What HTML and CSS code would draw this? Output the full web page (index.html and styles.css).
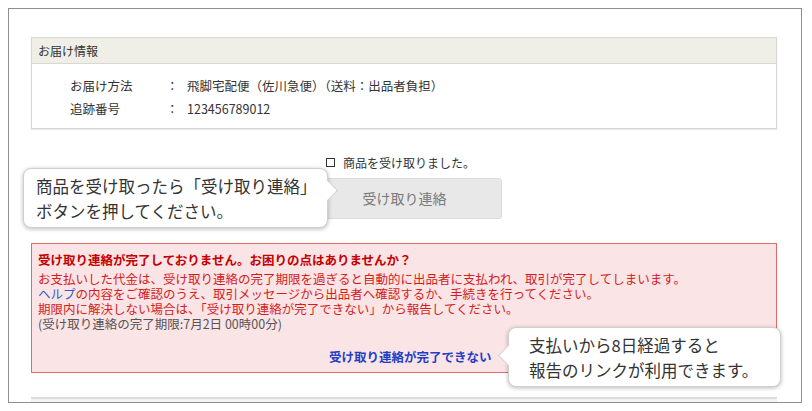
FILE: index.html
```html
<!DOCTYPE html>
<html lang="ja">
<head>
<meta charset="utf-8">
<title>お届け情報</title>
<link rel="stylesheet" href="styles.css">
</head>
<body>
<div class="frame">
  <section class="info">
    <div class="info-head">お届け情報</div>
    <div class="info-body">
      <div class="row"><span class="label">お届け方法</span><span class="colon">：</span><span class="value">飛脚宅配便（佐川急便）（送料：出品者負担）</span></div>
      <div class="row"><span class="label">追跡番号</span><span class="colon">：</span><span class="value">123456789012</span></div>
    </div>
  </section>

  <div class="receive">
    <label class="check"><span class="box"></span>商品を受け取りました。</label>
    <div class="btn">受け取り連絡</div>
  </div>

  <section class="alert">
    <p class="alert-title">受け取り連絡が完了しておりません。お困りの点はありませんか？</p>
    <p class="alert-line">お支払いした代金は、受け取り連絡の完了期限を過ぎると自動的に出品者に支払われ、取引が完了してしまいます。</p>
    <p class="alert-line"><span class="help">ヘルプ</span>の内容をご確認のうえ、取引メッセージから出品者へ確認するか、手続きを行ってください。</p>
    <p class="alert-line">期限内に解決しない場合は、「受け取り連絡が完了できない」から報告してください。</p>
    <p class="alert-limit">(受け取り連絡の完了期限:7月2日 00時00分)</p>
    <p class="alert-link"><span class="link">受け取り連絡が完了できない</span></p>
  </section>

  <div class="next"></div>

  <div class="tip tip-right">商品を受け取ったら「受け取り連絡」<br>ボタンを押してください。</div>
  <div class="tip tip-left">支払いから8日経過すると<br>報告のリンクが利用できます。</div>
</div>
</body>
</html>
```

FILE: styles.css
```css
* { box-sizing: border-box; }
html, body { margin: 0; padding: 0; background: #fff; }
body {
  padding: 8px 0 0 8px;
  font-family: "Noto Sans CJK JP", "Noto Sans", sans-serif;
  color: #333;
}
p { margin: 0; }

.frame {
  position: relative;
  width: 794px;
  height: 395px;
  border: 1px solid #8f8f8f;
  padding: 28px 0 0 22px;
  overflow: hidden;
}

.info {
  width: 746px;
  border: 1px solid #d6d6d2;
  box-shadow: 0 1px 1px rgba(0,0,0,0.08);
}
.info-head {
  height: 26px;
  line-height: 25px;
  background: #efeee7;
  border-bottom: 1px solid #d8d8d2;
  padding-left: 6px;
  font-size: 12px;
  color: #333;
}
.info-body { padding: 10px 0 8px 38px; }
.row {
  display: flex;
  height: 23px;
  line-height: 23px;
  font-size: 12.5px;
  color: #333;
}
.label { width: 96px; }
.colon { width: 21px; }

.receive {
  display: flex;
  flex-direction: column;
  align-items: flex-start;
  margin-top: 25px;
}
.check {
  display: flex;
  align-items: center;
  margin-left: 295px;
  height: 16px;
  font-size: 12px;
  color: #333;
}
.box {
  width: 9px;
  height: 9px;
  border: 1px solid #333;
  margin-right: 8px;
}
.btn {
  margin-top: 8px;
  margin-left: 276px;
  width: 195px;
  height: 41px;
  line-height: 39px;
  text-align: center;
  font-size: 14px;
  color: #7a7a7a;
  background: #e8e8e8;
  border: 1px solid #dcdcdc;
  border-radius: 3px;
}

.alert {
  margin-top: 24px;
  width: 746px;
  height: 130px;
  border: 1px solid #e06a6a;
  background: #fbe4e5;
  padding: 8px 0 0 6px;
  font-size: 12.5px;
  line-height: 15px;
  color: #d41c1c;
}
.alert-title {
  font-weight: bold;
  color: #c40000;
  margin-bottom: 4px;
}
.help { color: #2f5fd0; }
.alert-limit { color: #555; }
.alert-link {
  margin-top: 18px;
  padding-left: 291px;
}
.link { color: #1f3fc4; font-weight: bold; }

.next {
  margin-top: 24px;
  width: 746px;
  height: 10px;
  border-top: 2px solid #dcdcdc;
  background: #f3f3f3;
}

.tip {
  position: absolute;
  background: #fff;
  border: 1px solid #cfcfcf;
  border-radius: 8px;
  box-shadow: 0 1px 4px rgba(0,0,0,0.28);
  font-size: 16.5px;
  line-height: 25px;
  color: #333;
  height: 60px;
}
.tip::after {
  content: "";
  position: absolute;
  width: 14px;
  height: 14px;
  background: #fff;
  border: 1px solid #cfcfcf;
  transform: rotate(45deg);
}
.tip-right {
  left: 14px;
  top: 159px;
  width: 305px;
  padding: 5px 0 0 12px;
}
.tip-right::after {
  right: -8px;
  top: 14px;
  border-left: none;
  border-bottom: none;
}
.tip-left {
  left: 499px;
  top: 318px;
  width: 273px;
  padding: 5px 0 0 20px;
}
.tip-left::after {
  left: -8px;
  top: 20px;
  border-right: none;
  border-top: none;
}
```
